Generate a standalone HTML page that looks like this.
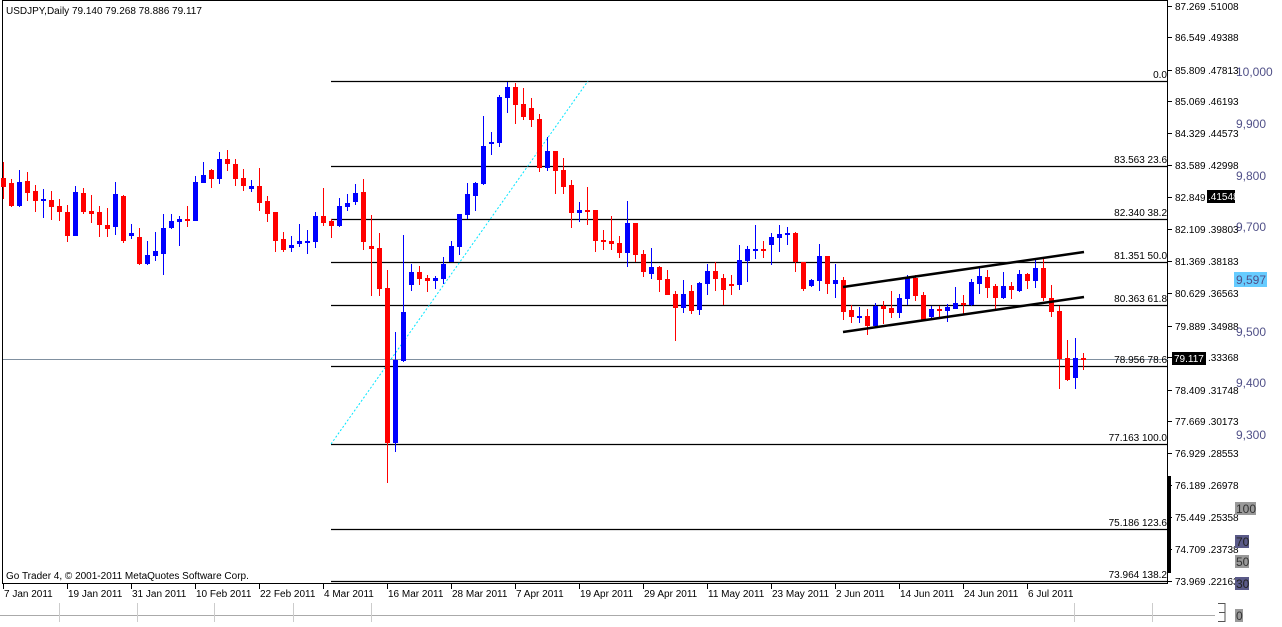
<!DOCTYPE html>
<html><head><meta charset="utf-8"><style>
body{margin:0;width:1282px;height:622px;overflow:hidden;background:#fff;font-family:"Liberation Sans",sans-serif;}
svg text{font-family:"Liberation Sans",sans-serif;font-size:10px;}
</style></head><body>
<svg id="s" width="1282" height="622" xmlns="http://www.w3.org/2000/svg">
<rect x="0" y="0" width="1282" height="622" fill="#fff"/>
<g stroke="#ccc" stroke-width="1">
<line x1="0" y1="615.5" x2="1215" y2="615.5" stroke="#aaa"/>
<line x1="59.5" y1="603" x2="59.5" y2="622"/><line x1="137.5" y1="603" x2="137.5" y2="622"/>
<line x1="214.5" y1="603" x2="214.5" y2="622"/><line x1="293.5" y1="603" x2="293.5" y2="622"/>
<line x1="371.5" y1="603" x2="371.5" y2="622"/><line x1="1074.5" y1="603" x2="1074.5" y2="622"/>
<line x1="1152.5" y1="603" x2="1152.5" y2="622"/>
</g>
<path d="M1218 603.5h7v18h-7M1225 612.5h-6" fill="none" stroke="#555"/>
<rect x="2.5" y="0.5" width="1165" height="583" fill="none" stroke="#000"/>
<g id="ticks" stroke="#000"></g>
<line x1="3" y1="359.5" x2="1168" y2="359.5" stroke="#8090a0"/>
<g stroke="#000" stroke-width="1.3" id="fib"></g>
<line x1="331" y1="444" x2="588" y2="81" stroke="#00e5ff" stroke-width="1" stroke-dasharray="2,2"/>
<g id="candles"></g>
<line x1="843" y1="287" x2="1084" y2="252" stroke="#000" stroke-width="2.5"/>
<line x1="843" y1="332" x2="1084" y2="297" stroke="#000" stroke-width="2.5"/>
<text x="6" y="14" fill="#000">USDJPY,Daily  79.140 79.268 78.886 79.117</text>
<text x="6" y="579" fill="#000">Go Trader 4, © 2001-2011 MetaQuotes Software Corp.</text>
<rect x="1168" y="476" width="3" height="97" fill="#000"/>
<g id="axis"></g>
<rect x="1172" y="352" width="34" height="13" fill="#000"/>
<text x="1174" y="362" fill="#fff">79.117</text>
<rect x="1207" y="190" width="28" height="13" fill="#000"/>
<text x="1208" y="200" fill="#fff">.41548</text>
<g fill="#505088">
<text x="1236" y="76" style="font-size:12px">10,000</text>
<text x="1236" y="128" style="font-size:12px">9,900</text>
<text x="1236" y="180" style="font-size:12px">9,800</text>
<text x="1236" y="231" style="font-size:12px">9,700</text>
<text x="1236" y="336" style="font-size:12px">9,500</text>
<text x="1236" y="387" style="font-size:12px">9,400</text>
<text x="1236" y="439" style="font-size:12px">9,300</text>
</g>
<rect x="1234" y="272" width="33" height="15" fill="#66ccff"/>
<text x="1236" y="284" fill="#505088" style="font-size:12px">9,597</text>
<rect x="1235" y="502" width="21" height="13" fill="#999"/><text x="1236" y="513" fill="#333" style="font-size:12px">100</text>
<rect x="1235" y="535" width="14" height="13" fill="#5a5a88"/><text x="1236" y="546" fill="#222" style="font-size:12px">70</text>
<rect x="1235" y="555" width="14" height="13" fill="#999"/><text x="1236" y="566" fill="#333" style="font-size:12px">50</text>
<rect x="1235" y="577" width="14" height="13" fill="#5a5a88"/><text x="1236" y="588" fill="#222" style="font-size:12px">30</text>
<rect x="1235" y="609" width="8" height="13" fill="#999"/><text x="1236" y="620" fill="#333" style="font-size:12px">0</text>
</svg>
<script>
var NS="http://www.w3.org/2000/svg";
function el(p,t,a,txt){var e=document.createElementNS(NS,t);for(var k in a)e.setAttribute(k,a[k]);if(txt!=null)e.textContent=txt;p.appendChild(e);return e;}
var D=[
[178,187,162,199,'r'],[183,206,179,207,'r'],[182,206,170,207,'b'],[181,193,172,201,'r'],[191,201,185,212,'r'],[199,201,189,218,'b'],[200,207,191,220,'r'],[206,212,199,221,'r'],[212,236,205,242,'r'],[192,236,186,236,'b'],
[193,212,188,214,'r'],[211,214,195,223,'r'],[212,225,206,237,'r'],[225,229,208,237,'r'],[194,227,182,235,'b'],[196,241,195,243,'r'],[233,236,224,239,'b'],[237,264,228,265,'r'],[255,264,241,265,'b'],[251,256,232,261,'b'],
[228,254,214,275,'b'],[221,228,214,229,'b'],[219,222,216,246,'b'],[219,221,206,227,'r'],[182,221,176,221,'b'],[175,183,162,183,'b'],[170,179,169,188,'r'],[159,179,152,184,'b'],[159,164,150,171,'r'],[164,179,159,186,'r'],
[178,186,169,191,'r'],[186,189,180,192,'b'],[186,203,168,211,'r'],[201,214,196,222,'r'],[212,241,212,252,'r'],[239,250,232,252,'r'],[245,248,236,252,'b'],[241,244,224,247,'b'],[241,242,230,254,'b'],[216,242,212,248,'b'],
[216,223,188,226,'r'],[221,226,219,238,'r'],[206,226,198,227,'b'],[203,207,194,211,'b'],[193,202,184,205,'b'],[192,242,179,250,'r'],[246,249,215,296,'r'],[248,289,233,296,'r'],[288,443,270,483,'r'],[360,443,332,452,'b'],
[312,361,235,362,'b'],[272,285,264,291,'b'],[272,279,266,285,'r'],[278,281,275,292,'r'],[278,281,276,289,'b'],[264,279,257,284,'b'],[246,262,241,262,'b'],[214,247,214,255,'b'],[194,215,183,219,'b'],[183,196,182,211,'b'],
[146,184,116,185,'b'],[142,143,132,155,'b'],[97,143,95,147,'b'],[87,98,82,113,'b'],[87,105,83,124,'r'],[104,117,88,120,'r'],[108,120,98,127,'r'],[119,168,114,172,'r'],[151,168,137,171,'b'],[151,171,151,194,'r'],
[170,187,158,194,'r'],[185,213,180,228,'r'],[210,213,202,222,'b'],[210,212,187,225,'r'],[210,241,210,252,'r'],[240,242,230,250,'r'],[241,244,216,250,'r'],[243,253,236,258,'r'],[223,253,201,267,'b'],[223,255,223,262,'r'],
[254,272,250,277,'r'],[267,274,248,279,'b'],[267,280,266,292,'r'],[279,295,270,295,'r'],[294,308,291,341,'r'],[294,308,280,313,'b'],[291,311,285,314,'r'],[283,310,282,315,'b'],[271,284,264,295,'b'],[271,279,262,291,'r'],
[278,290,274,305,'r'],[284,285,275,295,'r'],[260,285,245,290,'b'],[249,261,246,282,'b'],[249,250,225,259,'b'],[249,251,241,258,'r'],[237,245,233,265,'b'],[234,238,225,252,'b'],[233,235,227,245,'b'],[233,262,232,272,'r'],
[262,289,262,291,'r'],[280,286,279,287,'b'],[256,281,244,291,'b'],[256,284,256,294,'r'],[280,284,264,298,'b'],[280,312,277,320,'r'],[310,317,305,323,'r'],[316,317,307,323,'b'],[316,326,309,335,'r'],[306,326,303,327,'b'],
[306,309,301,324,'r'],[308,313,291,318,'r'],[298,313,294,318,'b'],[277,299,275,305,'b'],[278,296,275,301,'r'],[295,320,292,320,'r'],[309,317,306,318,'b'],[309,311,306,319,'r'],[307,311,304,322,'b'],[303,309,287,309,'b'],
[303,305,295,314,'r'],[282,305,279,306,'b'],[276,284,266,294,'b'],[277,288,270,298,'r'],[286,298,284,310,'r'],[286,298,272,299,'b'],[286,290,282,299,'r'],[274,291,270,292,'b'],[274,281,273,289,'r'],[268,281,259,288,'b'],
[268,298,257,301,'r'],[298,312,285,317,'r'],[311,359,306,389,'r'],[358,380,340,381,'r'],[358,378,338,389,'b'],[358,359,353,370,'r']];
var g=document.getElementById('candles');
D.forEach(function(d,i){var x=3+8*i,c=d[4]=='r'?'#ff0000':'#0000ff';
el(g,'rect',{x:x,y:d[2],width:1,height:d[3]-d[2],fill:c});
el(g,'rect',{x:x-2,y:d[0],width:5,height:Math.max(2,d[1]-d[0]),fill:c});});
var fib=[[81,'0.0'],[166,'83.563  23.6'],[219,'82.340  38.2'],[262,'81.351  50.0'],[305,'80.363  61.8'],[366,'78.956  78.6'],[444,'77.163  100.0'],[529,'75.186  123.6'],[581,'73.964  138.2']];
var f=document.getElementById('fib'),s=document.getElementById('s');
fib.forEach(function(a){el(f,'line',{x1:331,y1:a[0]+.5,x2:1168,y2:a[0]+.5});
el(s,'text',{x:1167,y:a[0]-3,'text-anchor':'end',fill:'#000'},a[1]);});
var ax=document.getElementById('axis');
var P=[['87.269','.51008',6],['86.549','.49388',37],['85.809','.47813',70],['85.069','.46193',101],['84.329','.44573',133],['83.589','.42998',165],['82.849','',197],['82.109','.39803',229],['81.369','.38183',261],['80.629','.36563',293],['79.889','.34988',326],['','.33368',357],['78.409','.31748',390],['77.669','.30173',421],['76.929','.28553',453],['76.189','.26978',485],['75.449','.25358',517],['74.709','.23738',549],['73.969','.22163',581]];
P.forEach(function(p){el(ax,'line',{x1:1168,y1:p[2]+.5,x2:1172,y2:p[2]+.5,stroke:'#000'});
if(p[0])el(ax,'text',{x:1175,y:p[2]+4,fill:'#000'},p[0]);
if(p[1])el(ax,'text',{x:1208,y:p[2]+4,fill:'#000'},p[1]);});
var dates=['7 Jan 2011','19 Jan 2011','31 Jan 2011','10 Feb 2011','22 Feb 2011','4 Mar 2011','16 Mar 2011','28 Mar 2011','7 Apr 2011','19 Apr 2011','29 Apr 2011','11 May 2011','23 May 2011','2 Jun 2011','14 Jun 2011','24 Jun 2011','6 Jul 2011'];
var tk=document.getElementById('ticks');
dates.forEach(function(d,i){var x=3+64*i;el(tk,'line',{x1:x+.5,y1:584,x2:x+.5,y2:589});
el(s,'text',{x:x+1,y:597,fill:'#000'},d);});
</script>
</body></html>
